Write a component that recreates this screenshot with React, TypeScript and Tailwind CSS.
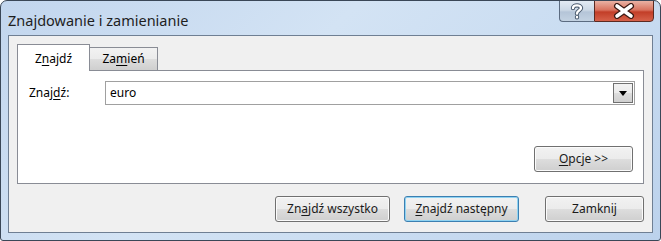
import React from "react";

const font = { fontFamily: '"Noto Sans", "Open Sans", sans-serif' };

function Btn({ children, w, focused }: { children: React.ReactNode; w: string; focused?: boolean }) {
  return (
    <div
      className={`${w} h-[26px] rounded-[3px] border ${
        focused ? "border-[#3c7fb1] shadow-[inset_0_0_0_1px_#8fd3f2]" : "border-[#707070] shadow-[inset_0_0_0_1px_#fbfbfb]"
      } bg-[linear-gradient(to_bottom,#f2f2f2_0%,#ebebeb_50%,#dddddd_51%,#cfcfcf_100%)] flex items-center justify-center text-[12px] text-[#1a1a1a] leading-none`}
    >
      {children}
    </div>
  );
}

export default function App() {
  return (
    <div
      className="w-[661px] h-[241px] flex flex-col rounded-t-[7px] rounded-b-[3px] border border-[#3a4757] bg-[linear-gradient(135deg,#c2d6ee_0%,#d3e3f4_40%,#c9dcf1_70%,#bcd2ec_100%)] overflow-hidden"
      style={font}
    >
      {/* Title bar */}
      <div className="h-[34px] flex items-start shrink-0">
        <div className="pl-[7px] pt-[9px] text-[14.5px] text-[#1e1e1e] leading-[20px] flex-1">
          Znajdowanie i zamienianie
        </div>
        <div className="flex mr-[6px] -mt-px">
          <div className="w-[35px] h-[22px] rounded-bl-[4px] border border-[#5b6b80] border-r-0 bg-[linear-gradient(to_bottom,#e3ebf4_0%,#cdd9e6_45%,#b5c5d8_55%,#c3d2e2_100%)] flex items-center justify-center">
            <svg width="14" height="18" viewBox="0 0 14 18">
              <path
                d="M3 6 C3 2.5 11 2.5 11 6 C11 8.5 7 8.5 7 11.5 M7 15 L7 15.2"
                fill="none"
                stroke="#4a5a6e"
                strokeWidth="4.4"
                strokeLinecap="round"
              />
              <path
                d="M3 6 C3 2.5 11 2.5 11 6 C11 8.5 7 8.5 7 11.5 M7 15 L7 15.2"
                fill="none"
                stroke="#ffffff"
                strokeWidth="2.4"
                strokeLinecap="round"
              />
            </svg>
          </div>
          <div className="w-[60px] h-[22px] rounded-br-[4px] border border-[#5b2a22] bg-[linear-gradient(to_bottom,#eab2a4_0%,#d9735f_45%,#c23e28_55%,#d6614a_100%)] flex items-center justify-center">
            <svg width="22" height="16" viewBox="0 0 22 16">
              <path d="M4 3 L18 13 M18 3 L4 13" stroke="#3b1a14" strokeWidth="6" strokeLinecap="round" />
              <path d="M4 3 L18 13 M18 3 L4 13" stroke="#ffffff" strokeWidth="3.6" strokeLinecap="round" />
            </svg>
          </div>
        </div>
      </div>

      {/* Content */}
      <div className="flex-1 ml-[7px] mr-[7px] border border-[#6f7f93] bg-[#f0f0f0] flex flex-col pl-[8px] pr-[8px] pt-[8px]">
        {/* Tabs */}
        <div className="flex items-end h-[27px] relative z-10">
          <div className="w-[73px] h-[27px] border border-b-0 border-[#898c95] bg-white flex items-center justify-center text-[12px] pt-[1px]">
            <span>
              Z<span className="underline underline-offset-2">n</span>ajdź
            </span>
          </div>
          <div className="w-[68px] h-[23px] mb-px border border-l-0 border-b-0 border-[#898c95] bg-[linear-gradient(to_bottom,#f2f2f2_0%,#ebebeb_50%,#dddddd_51%,#cfcfcf_100%)] flex items-center justify-center text-[12px]">
            <span>
              Za<span className="underline underline-offset-2">m</span>ień
            </span>
          </div>
        </div>
        {/* Panel */}
        <div className="-mt-px h-[114px] border border-[#898c95] bg-white pl-[11px] pr-[8px] pt-[10px] flex flex-col">
          <div className="flex items-center h-[24px]">
            <div className="w-[76px] text-[12px]">
              Znaj<span className="underline underline-offset-2">d</span>ź:
            </div>
            <div className="flex-1 h-[24px] border border-[#a0a0a0] flex items-center pl-[4px] pr-px">
              <span className="flex-1 text-[12px]">euro</span>
              <div className="w-[20px] h-[20px] border border-[#707070] bg-[linear-gradient(to_bottom,#f2f2f2_0%,#ebebeb_50%,#dddddd_51%,#cfcfcf_100%)] flex items-center justify-center">
                <svg width="8" height="5" viewBox="0 0 8 5">
                  <path d="M0 0 H8 L4 5 Z" fill="#000" />
                </svg>
              </div>
            </div>
          </div>
          <div className="flex justify-end mt-[41px] pr-[2px]">
            <Btn w="w-[99px]">
              <span>
                <span className="underline underline-offset-2">O</span>pcje &gt;&gt;
              </span>
            </Btn>
          </div>
        </div>
        {/* Bottom buttons */}
        <div className="flex justify-end mt-[12px]">
          <Btn w="w-[115px]">
            <span>
              Zn<span className="underline underline-offset-2">a</span>jdź wszystko
            </span>
          </Btn>
          <div className="w-[14px]" />
          <Btn w="w-[115px]" focused>
            <span>
              <span className="underline underline-offset-2">Z</span>najdź następny
            </span>
          </Btn>
          <div className="w-[26px]" />
          <Btn w="w-[99px]">Zamknij</Btn>
        </div>
      </div>
      <div className="h-[7px] shrink-0" />
    </div>
  );
}
